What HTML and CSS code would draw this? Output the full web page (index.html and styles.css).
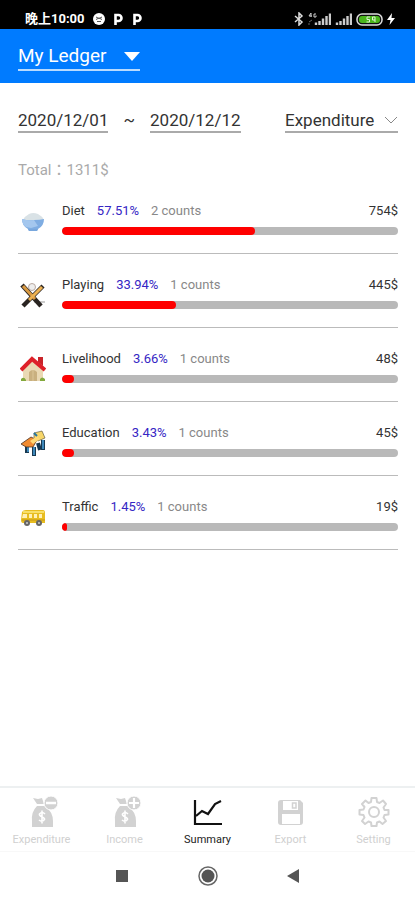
FILE: index.html
```html
<!DOCTYPE html>
<html lang="en">
<head>
<meta charset="utf-8">
<meta name="viewport" content="width=device-width, initial-scale=1">
<title>My Ledger</title>
<link rel="stylesheet" href="styles.css">
</head>
<body>
<div class="status">
  <span class="clock">晚上10:00</span>
  <svg class="badge" width="12" height="12" viewBox="0 0 12 12"><circle cx="6" cy="6" r="6" fill="#fff"/><path d="M3 4Q6 7 9 4M3 6.500Q6 3.500 9 6.500M4 8.500H8" fill="none" stroke="#555" stroke-width="1"/></svg>
  <svg class="badge" width="12" height="12" viewBox="0 0 12 12"><path d="M3.500 12V2H6.500a2.800 2.800 0 0 1 0 6H3.500" fill="none" stroke="#fff" stroke-width="2.600"/></svg>
  <svg class="badge" width="12" height="12" viewBox="0 0 12 12"><path d="M3.500 12V2H6.500a2.800 2.800 0 0 1 0 6H3.500" fill="none" stroke="#fff" stroke-width="2.600"/></svg>
  <div class="signals">
    <svg width="10" height="14" viewBox="0 0 10 14"><path d="M1 4L8 10L5 13V1L8 4L1 10" fill="none" stroke="#ddd" stroke-width="1.500"/></svg>
    <svg class="cell" width="23" height="14" viewBox="0 0 23 14"><path d="M3 1L1 4H4M3 1V5M8 2H6V5H8V3.500" fill="none" stroke="#ccc"/><path d="M1 10L4 8M1 13V11" fill="none" stroke="#666"/><path d="M8 13V10.500M11.500 13V9M15 13V6.500M18.500 13V4M22 13V1.500" stroke="#ccc" stroke-width="2.400"/></svg>
    <svg width="17" height="14" viewBox="0 0 17 14"><path d="M2 13V10.500M5.500 13V9M9 13V6.500M12.500 13V4M16 13V1.500" stroke="#ccc" stroke-width="2.400"/></svg>
    <svg width="27" height="14" viewBox="0 0 27 14"><rect x="1" y="2" width="25" height="11" rx="5" fill="#111" stroke="#ddd" stroke-width="1.500"/><rect x="3" y="4" width="21" height="7" rx="3" fill="#49b51c"/><path d="M14 5H11V7.500H13.500V10H10.500M19 10V5H16.500V8H19" fill="none" stroke="#dff5d5"/></svg>
    <svg width="8" height="14" viewBox="0 0 8 14"><path d="M5 1L0 8H3.500L2.500 13L8 6H4.500Z" fill="#fff"/></svg>
  </div>
</div>

<header class="header">
  <label class="ledger">
    <select class="ledger-select" aria-label="Ledger"><option>My Ledger</option></select>
    <svg width="16" height="9" viewBox="0 0 16 9"><path d="M0 0H16L8 9Z" fill="#fff"/></svg>
  </label>
</header>

<main class="main">
  <div class="filters">
    <button class="field" type="button">2020/12/01</button>
    <span class="tilde">~</span>
    <button class="field" type="button">2020/12/12</button>
    <label class="field kind">
      <select class="kind-select" aria-label="Type"><option>Expenditure</option><option>Income</option></select>
      <svg width="14" height="8" viewBox="0 0 14 8"><path d="M1 1L7 7L13 1" fill="none" stroke="#888"/></svg>
    </label>
  </div>
  <p class="total">Total：1311$</p>

  <ul class="list">
    <li class="row">
      <svg class="icon" viewBox="0 0 26 26"><path d="M3 12Q5 8 9 6Q13 4 18 6Q22 8 24 12L13 14Z" fill="#d9e2e6"/><path d="M2 11Q8 13 14 12Q20 12 24 11Q24 18 18 21L17 23H9L8 21Q2 18 2 11Z" fill="#7fadE2"/><path d="M2 11Q8 13 14 12L18 18L11 20L6 19Q2 16 2 11Z" fill="#a4c7ee"/><path d="M8 21H18L17 23H9Z" fill="#78a7dd"/></svg>
      <div class="info">
        <div class="line"><span>Diet</span><span class="pct">57.51%</span><span class="counts">2 counts</span><span class="amount">754$</span></div>
        <div class="track" role="progressbar" aria-label="Diet" aria-valuenow="57.51"><div class="fill" style="width:57.51%"></div></div>
      </div>
    </li>
    <li class="row">
      <svg class="icon" viewBox="0 0 26 26"><path d="M14 20H25" stroke="#bbb" stroke-width="1.500"/><circle cx="12" cy="5" r="3.500" fill="#eee" stroke="#b9a9a0"/><path d="M2 3L21 24" stroke="#292421" stroke-width="4.500"/><path d="M23 4L3 24" stroke="#292421" stroke-width="4.500"/><path d="M3 4L15 17" stroke="#d99a42" stroke-width="3"/><path d="M22 5L9 18" stroke="#edb252" stroke-width="3"/></svg>
      <div class="info">
        <div class="line"><span>Playing</span><span class="pct">33.94%</span><span class="counts">1 counts</span><span class="amount">445$</span></div>
        <div class="track" role="progressbar" aria-label="Playing" aria-valuenow="33.94"><div class="fill" style="width:33.94%"></div></div>
      </div>
    </li>
    <li class="row">
      <svg class="icon" viewBox="0 0 26 26"><path d="M3 12L13 4L23 12V25H3Z" fill="#ead9b4"/><path d="M18 1H23V10L18 6Z" fill="#c9242a"/><path d="M9 25V16Q13 12 17 16V25Z" fill="#c9b07f"/><path d="M13 14V25" stroke="#dcc698"/><path d="M1 14L12 3L25 14" fill="none" stroke="#de2029" stroke-width="4"/><path d="M1 25V23Q4 20 6 24V25M20 25V23Q22 20 25 23V25Z" fill="#83a93d"/></svg>
      <div class="info">
        <div class="line"><span>Livelihood</span><span class="pct">3.66%</span><span class="counts">1 counts</span><span class="amount">48$</span></div>
        <div class="track" role="progressbar" aria-label="Livelihood" aria-valuenow="3.66"><div class="fill" style="width:3.66%"></div></div>
      </div>
    </li>
    <li class="row">
      <svg class="icon" viewBox="0 0 26 26"><path d="M7 16V23M14 17V26M18 13L20 20M23 10V20" fill="none" stroke="#183951" stroke-width="4"/><path d="M8 16V22M14 17V25M23 10V19" stroke="#3e88ba" stroke-width="2"/><path d="M14 3L22 1L25 8L18 11L14 8Z" fill="#f7d66a" stroke="#4b462f" stroke-width=".6"/><path d="M1 14L11 7L17 10L13 17L6 17Z" fill="#f18b31" stroke="#4a3326" stroke-width=".8"/><path d="M10 11L17 6L20 9L13 14Z" fill="#ffd875"/><path d="M14 3L17 6" stroke="#28759f" stroke-width="2"/></svg>
      <div class="info">
        <div class="line"><span>Education</span><span class="pct">3.43%</span><span class="counts">1 counts</span><span class="amount">45$</span></div>
        <div class="track" role="progressbar" aria-label="Education" aria-valuenow="3.43"><div class="fill" style="width:3.43%"></div></div>
      </div>
    </li>
    <li class="row">
      <svg class="icon" viewBox="0 0 26 26"><path d="M2 8Q3 6 6 6H23Q25 6 25 9V19H3Q1 19 1 16Z" fill="#e8bd20"/><path d="M3 8H24" stroke="#f7df69" stroke-width="2"/><path d="M3 10H7V14H2ZM9 10H12V14H9ZM14 10H17V14H14ZM19 10H22V14H19Z" fill="#fff0b5"/><path d="M2 16H25" stroke="#c69616"/><circle cx="7" cy="19" r="3" fill="#666"/><circle cx="19" cy="19" r="3" fill="#666"/><circle cx="7" cy="19" r="1" fill="#ccc"/><circle cx="19" cy="19" r="1" fill="#ccc"/></svg>
      <div class="info">
        <div class="line"><span>Traffic</span><span class="pct">1.45%</span><span class="counts">1 counts</span><span class="amount">19$</span></div>
        <div class="track" role="progressbar" aria-label="Traffic" aria-valuenow="1.45"><div class="fill" style="width:1.45%"></div></div>
      </div>
    </li>
  </ul>
</main>

<nav class="tabs">
  <a class="tab" href="#expenditure">
    <svg width="32" height="32" viewBox="0 0 32 32"><path d="M7 2L12 3L16 2L18 8H11Z" fill="#d2d2d2"/><path d="M11 10H19Q27 16 27 25V31H6V25Q5 16 11 10Z" fill="#d2d2d2"/><circle cx="25" cy="7" r="7" fill="#d2d2d2" stroke="#fff"/><path d="M20 7H30" stroke="#fff" stroke-width="2.500"/><path d="M19 18Q16 15 13.500 18C12.500 21 19 20.500 18.500 23.500Q16 26.500 13 24M16 14.500V27.500" fill="none" stroke="#fff" stroke-width="1.600"/></svg>
    <span>Expenditure</span>
  </a>
  <a class="tab" href="#income">
    <svg width="32" height="32" viewBox="0 0 32 32"><path d="M7 2L12 3L16 2L18 8H11Z" fill="#d2d2d2"/><path d="M11 10H19Q27 16 27 25V31H6V25Q5 16 11 10Z" fill="#d2d2d2"/><circle cx="25" cy="7" r="7" fill="#d2d2d2" stroke="#fff"/><path d="M20 7H30M25 2V12" stroke="#fff" stroke-width="2.200"/><path d="M19 18Q16 15 13.500 18C12.500 21 19 20.500 18.500 23.500Q16 26.500 13 24M16 14.500V27.500" fill="none" stroke="#fff" stroke-width="1.600"/></svg>
    <span>Income</span>
  </a>
  <a class="tab active" href="#summary" aria-current="page">
    <svg width="32" height="32" viewBox="0 0 32 32"><path d="M3 4V28H30" fill="none" stroke="#111" stroke-width="2.200"/><path d="M4 20L10 15L16 18L23 8L29 5" fill="none" stroke="#111" stroke-width="2.200"/></svg>
    <span>Summary</span>
  </a>
  <a class="tab" href="#export">
    <svg width="32" height="32" viewBox="0 0 32 32"><path d="M6 4H25L28 7V26Q28 29 25 29H6Q3 29 3 26V7Q3 4 6 4Z" fill="#d2d2d2"/><path d="M8 5H23V14H8ZM7 18H25V28H7Z" fill="#fff"/><path d="M17.500 7H21V12H17.500Z" fill="#fff" stroke="#d2d2d2" stroke-width="1.500"/></svg>
    <span>Export</span>
  </a>
  <a class="tab" href="#setting">
    <svg width="32" height="32" viewBox="0 0 32 32"><path d="M13.500 2H18.500L19 6L21.500 7L25 4.500L28 8L25.500 11.500L26.500 14H30.500V18.500L26.500 19L25.500 21.500L28 25L24.500 28L21.500 25.500L19 26.500L18.500 30H13.500L13 26.500L10.500 25.500L7 28L4 25L6.500 21.500L5.500 19L1.500 18.500V14L5.500 13.500L6.500 11L4 8L7.500 4.500L10.500 7L13 6Z" fill="none" stroke="#d2d2d2" stroke-width="2" stroke-linejoin="round"/><circle cx="16" cy="16" r="5" fill="none" stroke="#d2d2d2" stroke-width="2"/></svg>
    <span>Setting</span>
  </a>
</nav>
<div class="system">
  <button class="sys" type="button" aria-label="Recent apps"><svg width="22" height="22" viewBox="0 0 22 22"><path d="M5 5H17V17H5Z" fill="#555"/></svg></button>
  <button class="sys" type="button" aria-label="Home"><svg width="22" height="22" viewBox="0 0 22 22"><circle cx="11" cy="11" r="9" fill="none" stroke="#666" stroke-width="1.500"/><circle cx="11" cy="11" r="6.500" fill="#555"/></svg></button>
  <button class="sys" type="button" aria-label="Back"><svg width="22" height="22" viewBox="0 0 22 22"><path d="M16 4V18L4 11Z" fill="#555"/></svg></button>
</div>
</body>
</html>
```
FILE: styles.css
```css
* { box-sizing: border-box; }

body {
  margin: 0;
  min-height: 100vh;
  display: flex;
  flex-direction: column;
  background: #fff;
  color: #333;
  font-family: Roboto, "Noto Sans CJK TC", sans-serif;
}

button, select {
  font: inherit;
  color: inherit;
  background: none;
  border: 0;
  padding: 0;
  margin: 0;
  border-radius: 0;
}

select { appearance: none; }
svg { display: block; flex: none; }

.status {
  display: flex;
  align-items: center;
  height: 29px;
  padding: 8px 20px 0 25px;
  background: #000;
  color: #fff;
}
.clock { font-size: 13px; font-weight: 700; line-height: 20px; margin-right: 8px; }
.badge { margin-right: 7px; }
.signals { display: flex; gap: 4px; margin-left: auto; }

.header {
  height: 54px;
  padding: 14px 18px 0;
  background: #007bff;
  color: #fff;
}
.ledger {
  display: inline-flex;
  align-items: center;
  gap: 17px;
  height: 28px;
  border-bottom: 2px solid #b9dbff;
}
.ledger-select { font-size: 19px; line-height: 24px; }

.main { flex: 1; padding: 26px 17px 0 18px; }

.filters { display: flex; font-size: 17px; line-height: 22px; }
.field { height: 24px; border-bottom: 2px solid #aaa; }
.tilde { margin: 0 15px; }
.kind { display: flex; align-items: center; gap: 9px; margin-left: auto; }

.total {
  margin: 27px 0 0;
  font-size: 15px;
  line-height: 20px;
  color: #aaa;
}

.list { list-style: none; margin: 0; padding: 0; }
.row {
  display: flex;
  gap: 16px;
  padding: 22px 0 18px;
  border-bottom: 1px solid #bbb;
}
.icon { width: 26px; height: 26px; margin: 6px 0 0 2px; }
.info { flex: 1; }
.line { display: flex; gap: 12px; font-size: 13px; line-height: 18px; }
.pct { color: #3526c4; }
.counts { color: #888; }
.amount { margin-left: auto; }
.track {
  height: 8px;
  margin-top: 7px;
  border-radius: 4px;
  background: #b9b9b9;
  overflow: hidden;
}
.fill { height: 100%; border-radius: 4px; background: #f00; }

.tabs {
  display: grid;
  grid-template-columns: repeat(5, 1fr);
  border-top: 2px solid #edf0f1;
  border-bottom: 1px solid #f8f8f8;
}
.tab {
  display: flex;
  flex-direction: column;
  align-items: center;
  gap: 4px;
  padding: 8px 0 3px;
  font-size: 11px;
  line-height: 16px;
  color: #d0d0d0;
  text-decoration: none;
}
.active { color: #222; }

.system {
  display: flex;
  justify-content: center;
  gap: 64px;
  padding: 13px 0 13px;
}
```
